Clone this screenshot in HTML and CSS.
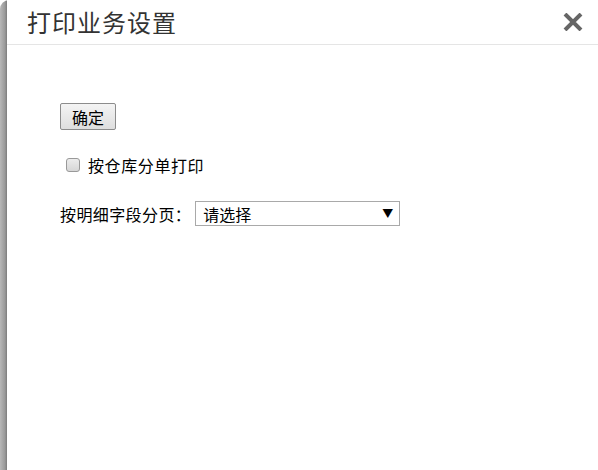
FILE: index.html
```html
<!DOCTYPE html>
<html lang="zh-CN">

<head>
    <meta charset="UTF-8">
    <meta name="viewport" content="width=device-width, initial-scale=1.0">
    <title>打印业务设置</title>
    <link rel="stylesheet" href="styles.css">
</head>

<body>
    <div class="frame">
        <div class="panel">
            <div class="header">
                <h3 class="title">打印业务设置</h3>
                <span class="close">
                    <svg width="20" height="18" viewBox="0 0 20 18">
                        <path d="M2 1 L18 17 M18 1 L2 17" stroke="#666" stroke-width="4" />
                    </svg>
                </span>
            </div>
            <div class="content">
                <button class="btn" type="button">确定</button>
                <label class="check-row">
                    <input type="checkbox" class="check">
                    <span>按仓库分单打印</span>
                </label>
                <div class="field-row">
                    <span class="field-label">按明细字段分页：</span>
                    <span class="select-wrap">
                        <select class="select">
                            <option>请选择</option>
                        </select>
                    </span>
                </div>
            </div>
        </div>
    </div>
</body>

</html>
```

FILE: styles.css
```css
* {
    margin: 0;
    padding: 0;
    box-sizing: border-box;
}

body {
    width: 598px;
    height: 470px;
    background-color: #fff;
    font-family: "Noto Sans CJK SC", "Liberation Sans", sans-serif;
    color: #000;
    overflow: hidden;
}

.frame {
    height: 470px;
    padding-left: 7px;
    padding-top: 2px;
    border-top-left-radius: 9px;
    background: linear-gradient(to right, #b8b8b8, #9a9a9a 70%, #7c7c7c) no-repeat 0 0 / 7px 100%;
}

.panel {
    height: 100%;
    margin-top: -2px;
    background-color: #fff;
    border-top-left-radius: 4px;
}

.header {
    display: flex;
    align-items: center;
    justify-content: space-between;
    height: 45px;
    padding: 0 15px 2px 20px;
    border-bottom: 1px solid #e5e5e5;
}

.title {
    font-size: 24px;
    font-weight: normal;
    color: #333;
    letter-spacing: 1px;
}

.close {
    display: flex;
    margin-top: 2px;
}

.content {
    display: flex;
    flex-direction: column;
    align-items: flex-start;
    padding: 58px 0 0 53px;
    font-size: 16px;
}

.btn {
    width: 56px;
    height: 27px;
    font-family: inherit;
    font-size: 16px;
    color: #000;
    border: 1px solid #8c8c8c;
    border-radius: 2px;
    background: linear-gradient(#f4f4f4, #dedede);
}

.check-row {
    display: flex;
    align-items: center;
    margin-top: 25px;
    margin-left: 6px;
    line-height: 20px;
    letter-spacing: 0.6px;
}

.check {
    width: 14px;
    height: 14px;
    margin-right: 8px;
    -webkit-appearance: none;
    appearance: none;
    border: 1px solid #999;
    border-radius: 3px;
    background: linear-gradient(#ececec, #d6d6d6);
}

.field-row {
    display: flex;
    align-items: center;
    margin-top: 26px;
}

.field-label {
    margin-right: 4px;
    letter-spacing: 0.4px;
}

.select-wrap {
    position: relative;
    display: flex;
}

.select {
    width: 205px;
    height: 25px;
    padding-left: 7px;
    font-family: inherit;
    font-size: 16px;
    color: #000;
    border: 1px solid #a9a9a9;
    border-radius: 0;
    background-color: #fff;
    -webkit-appearance: none;
    appearance: none;
}

.select-wrap::after {
    content: "▼";
    position: absolute;
    right: 7px;
    top: 5px;
    font-size: 11px;
    line-height: 14px;
    color: #000;
    pointer-events: none;
}
```
